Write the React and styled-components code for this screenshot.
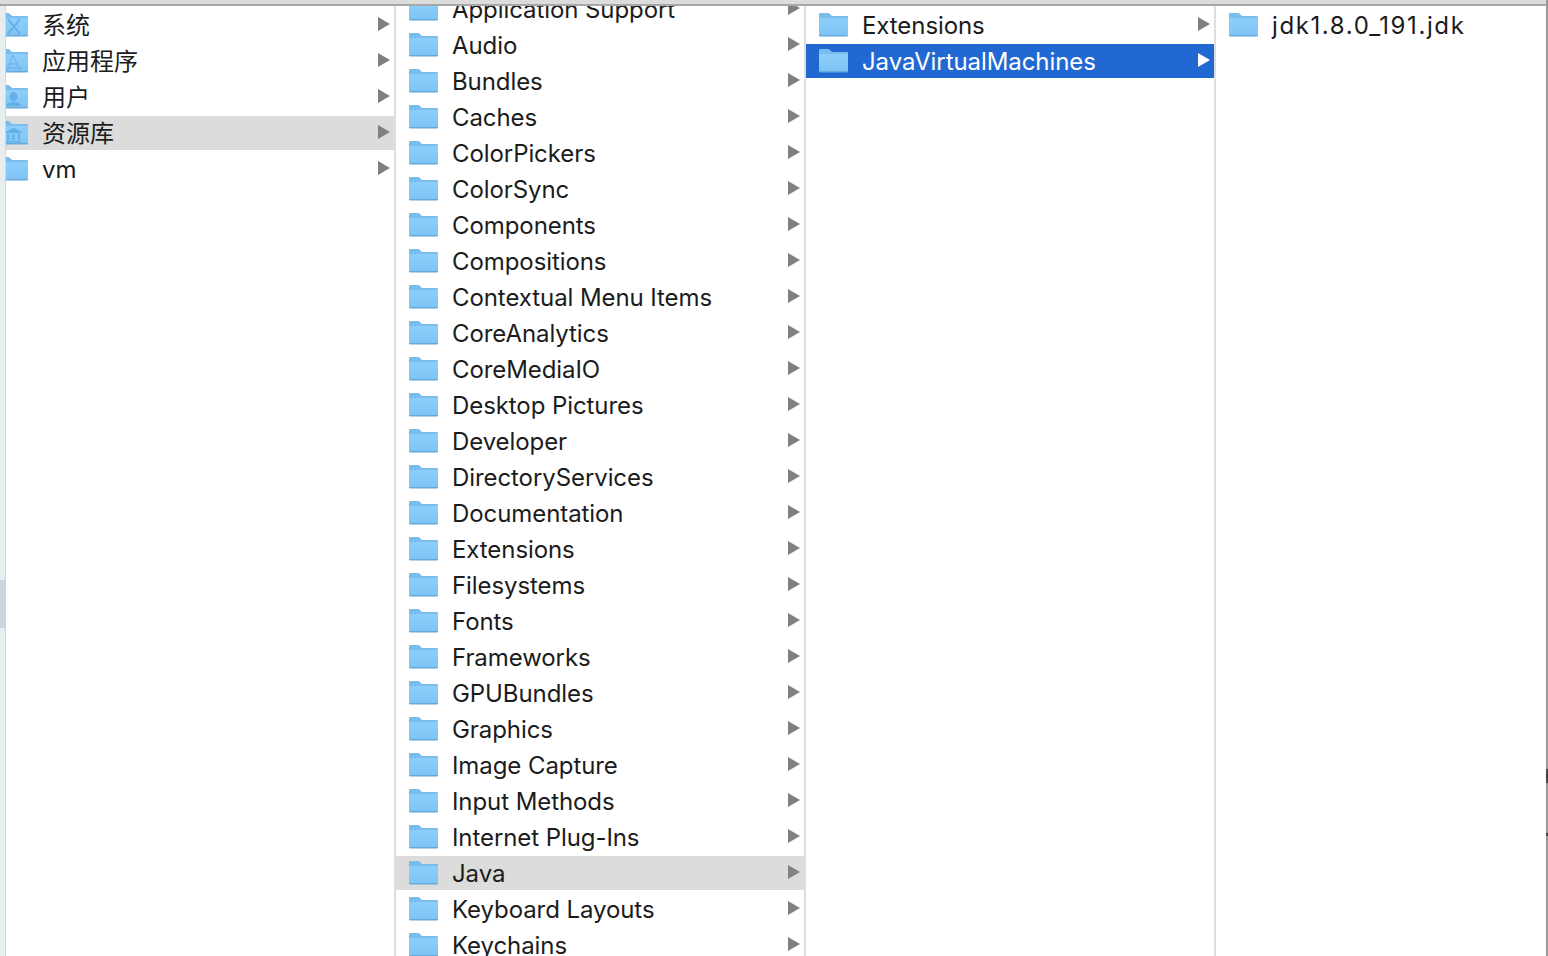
import styled, { createGlobalStyle } from 'styled-components';

const GlobalStyle = createGlobalStyle`
  html, body {
    margin: 0;
    height: 100%;
    overflow: hidden;
    background: #fff;
  }
`

const Window = styled.div`
  width: 1548px;
  height: 956px;
  display: flex;
  overflow: hidden;
  background: #fff;
  font-family: Inter, "Noto Sans CJK SC", sans-serif;
  color: #1c1c1c;
`

const Main = styled.div`
  flex: 1;
  min-width: 0;
  display: flex;
  flex-direction: column;
`

const RightEdge = styled.div`
  flex: none;
  width: 2px;
  display: flex;
  flex-direction: column;
  background: #989898;
`

const EdgeMark = styled.div`
  flex: none;
  height: ${props => props.$height}px;
  margin-top: ${props => props.$top}px;
  background: #444;
`

const TopEdge = styled.div`
  flex: none;
  height: 4px;
  background: #dcdcdc;
  border-bottom: 2px solid #a8a8a8;
`

const Browser = styled.div`
  flex: 1;
  min-height: 0;
  display: flex;
`

const Gutter = styled.div`
  flex: none;
  width: 5px;
  display: flex;
  flex-direction: column;
  background: #e8edf0;
  border-right: 1px solid #d4d4d4;
`

const GutterThumb = styled.div`
  height: 48px;
  margin-top: 574px;
  background: #c9d6de;
`

const Column = styled.div`
  flex: none;
  width: ${props => props.$width}px;
  overflow: hidden;
  border-right: 2px solid #dedede;
  box-sizing: border-box;
`

const LastColumn = styled.div`
  flex: 1;
  min-width: 0;
  overflow: hidden;
`

const List = styled.div`
  display: flex;
  flex-direction: column;
  gap: 2px;
  margin-top: ${props => props.$offset}px;
`

const Row = styled.div`
  height: 34px;
  flex: none;
  display: flex;
  align-items: center;
  padding-left: ${props => props.$inset}px;
  padding-right: 4px;
  font-size: 24px;
  white-space: nowrap;
  background: ${props => props.$selected === 'active' ? '#2268d2' : props.$selected ? '#dcdcdc' : 'transparent'};
  color: ${props => props.$selected === 'active' ? '#fff' : '#1c1c1c'};
`

const FolderWrap = styled.svg`
  flex: none;
  width: 31px;
  height: 25px;
  margin-left: ${props => props.$shift}px;
  margin-right: 13px;
  margin-top: -2px;
`

const Label = styled.span`
  flex: 1;
  min-width: 0;
  letter-spacing: ${props => props.$tracking ?? -0.08}px;
  padding-bottom: ${props => props.$cjk ? 4 : 0}px;
`

const Arrow = styled.svg`
  flex: none;
  width: 12px;
  height: 14px;
  margin-top: -2px;
  fill: ${props => props.$light ? '#fff' : '#808080'};
`

function Glyph({ type }) {
  const ink = '#64b0e6'
  if (type === 'x') {
    return <path d="M10 7 L22 22 M22 7 L10 22" stroke={ink} strokeWidth="2" fill="none" />
  }
  if (type === 'a') {
    return <path d="M5 20 H25 M15 7 L8 23 M15 7 L22 23 M11 16 H19" stroke={ink} strokeWidth="1" fill="none" />
  }
  if (type === 'user') {
    return <path d="M15.5 8 a4 4.6 0 0 1 0 9.2 a4 4.6 0 0 1 0 -9.2 Z M8 22 c0 -3 4 -4 7.5 -4 s7.5 1 7.5 4 Z" fill={ink} />
  }
  if (type === 'lib') {
    return <path d="M15.5 8 L24 12 V13 H7 V12 Z M9 14 h2 v6 h-2 Z M14.5 14 h2 v6 h-2 Z M20 14 h2 v6 h-2 Z M7.5 21 h16 v1.4 h-16 Z" fill={ink} />
  }
  return null
}

function Folder({ glyph, shift = 0 }) {
  return (
    <FolderWrap viewBox="0 0 31 25" $shift={shift}>
      <defs>
        <linearGradient id="folderFace" x1="0" y1="0" x2="0" y2="1">
          <stop offset="0" stopColor="#8dcffa" />
          <stop offset="1" stopColor="#7fc4f5" />
        </linearGradient>
      </defs>
      <path d="M1 2 Q1 1 2 1 H10 Q11 1 12 2 L14 4 H29 Q30 4 30 5 V22 Q30 24 28 24 H3 Q1 24 1 22 Z" fill="#79bdee" />
      <path d="M1 7 Q1 6 2 6 H29 Q30 6 30 7 V22 Q30 23.5 28.5 23.5 H2.5 Q1 23.5 1 22 Z" fill="url(#folderFace)" />
      <path d="M1 23 H30 V23.4 Q30 24.4 28.5 24.4 H2.5 Q1 24.4 1 23.4 Z" fill="#66aadd" />
      <Glyph type={glyph} />
    </FolderWrap>
  )
}

function Item({ name, glyph, selected, shift, cjk, inset = 12 }) {
  return (
    <Row $selected={selected} $inset={inset}>
      <Folder glyph={glyph} shift={shift} />
      <Label $cjk={cjk} $tracking={cjk ? 0 : undefined}>{name}</Label>
      <Arrow viewBox="0 0 12 14" $light={selected === 'active'}>
        <path d="M0 0 L12 7 L0 14 Z" />
      </Arrow>
    </Row>
  )
}

const places = [
  { name: '系统', glyph: 'x', cjk: true },
  { name: '应用程序', glyph: 'a', cjk: true },
  { name: '用户', glyph: 'user', cjk: true },
  { name: '资源库', glyph: 'lib', cjk: true, selected: 'idle' },
  { name: 'vm' },
]

const library = [
  'Application Support', 'Audio', 'Bundles', 'Caches', 'ColorPickers', 'ColorSync',
  'Components', 'Compositions', 'Contextual Menu Items', 'CoreAnalytics', 'CoreMediaIO',
  'Desktop Pictures', 'Developer', 'DirectoryServices', 'Documentation', 'Extensions',
  'Filesystems', 'Fonts', 'Frameworks', 'GPUBundles', 'Graphics', 'Image Capture',
  'Input Methods', 'Internet Plug-Ins', 'Java', 'Keyboard Layouts', 'Keychains',
]

export default function App() {
  return (
    <Window>
      <GlobalStyle />
      <Main>
        <TopEdge />
        <Browser>
          <Gutter><GutterThumb /></Gutter>
          <Column $width={390}>
            <List $offset={2}>
              {places.map(place => (
                <Item
                  key={place.name}
                  name={place.name}
                  glyph={place.glyph}
                  cjk={place.cjk}
                  selected={place.selected}
                  inset={0}
                  shift={-8}
                />
              ))}
            </List>
          </Column>
          <Column $width={410}>
            <List $offset={-14}>
              {library.map(name => (
                <Item key={name} name={name} selected={name === 'Java' ? 'idle' : undefined} />
              ))}
            </List>
          </Column>
          <Column $width={410}>
            <List $offset={2}>
              <Item name="Extensions" />
              <Item name="JavaVirtualMachines" selected="active" />
            </List>
          </Column>
          <LastColumn>
            <List $offset={2}>
              <Row $inset={12}>
                <Folder />
                <Label $tracking={1.6}>jdk1.8.0_191.jdk</Label>
              </Row>
            </List>
          </LastColumn>
        </Browser>
      </Main>
      <RightEdge>
        <EdgeMark $top={769} $height={14} />
        <EdgeMark $top={50} $height={3} />
      </RightEdge>
    </Window>
  )
}
